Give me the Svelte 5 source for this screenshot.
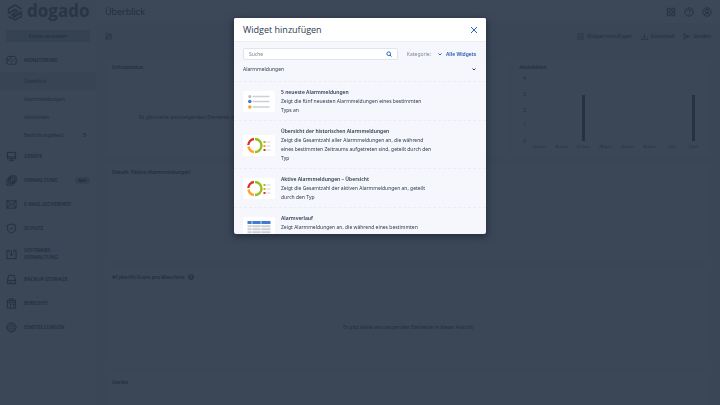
<script>
    let search = $state("");
    let category = $state("Alle Widgets");
    let isOpen = $state(true);
    let groupOpen = $state(true);

    let subItems = [
        { label: "Überblick", active: true },
        { label: "Alarmmeldungen" },
        { label: "Aktivitäten" },
        { label: "Bedrohungsfeed", count: 5 },
    ];
    let menu = [
        { label: "GERÄTE", icon: "screen" },
        { label: "VERWALTUNG", icon: "squares", badge: "NEU" },
        { label: "E-MAIL-SICHERHEIT", icon: "mail" },
        { label: "SCHUTZ", icon: "shield" },
        { label: "SOFTWARE-\nVERWALTUNG", icon: "box" },
        { label: "BACKUP STORAGE", icon: "disk" },
        { label: "BERICHTE", icon: "report" },
        { label: "EINSTELLUNGEN", icon: "gear" },
    ];
    let days = [
        { label: "25 Juni", value: 0 },
        { label: "26 Juni", value: 0 },
        { label: "27 Juni", value: 3 },
        { label: "28 Juni", value: 0 },
        { label: "29 Juni", value: 0 },
        { label: "30 Juni", value: 0 },
        { label: "1 Juli", value: 0 },
        { label: "2 Juli", value: 3 },
    ];
    let widgets = [
        {
            title: "5 neueste Alarmmeldungen",
            text: "Zeigt die fünf neuesten Alarmmeldungen eines bestimmten\nTyps an",
            thumb: "list",
        },
        {
            title: "Übersicht der historischen Alarmmeldungen",
            text: "Zeigt die Gesamtzahl aller Alarmmeldungen an, die während\neines bestimmten Zeitraums aufgetreten sind, geteilt durch den\nTyp",
            thumb: "donut",
        },
        {
            title: "Aktive Alarmmeldungen – Übersicht",
            text: "Zeigt die Gesamtzahl der aktiven Alarmmeldungen an, geteilt\ndurch den Typ",
            thumb: "donut",
        },
        {
            title: "Alarmverlauf",
            text: "Zeigt Alarmmeldungen an, die während eines bestimmten\nZeitraums aufgetreten sind",
            thumb: "table",
        },
    ];
</script>

{#snippet icon(name)}
    <svg class="icon" viewBox="0 0 24 24" aria-hidden="true">
        {#if name === "gauge"}
            <path d="M7 21c-3 0-5-2-5-5V9c0-4 2-6 6-6h8c4 0 6 2 6 6v7c0 3-2 5-5 5" />
            <path d="M11 15l5-6M6 13c0-4 3-6 6-6M8 20h8" />
        {:else if name === "screen"}
            <path d="M3 3h18v14H3zM3 13h18M12 17v4M7 21h10" />
        {:else if name === "squares"}
            <path d="M9 2h13v13H9zM2 9h13v13H2zM6 5h13v13H6z" />
        {:else if name === "mail"}
            <path d="M2 4h20v16H2zM2 4l10 9L22 4M2 20l8-9M22 20l-8-9" />
        {:else if name === "shield"}
            <path d="M12 2l9 3v7c0 5-4 8-9 10-5-2-9-5-9-10V5zM8 11l3 3 5-5" />
        {:else if name === "box"}
            <path d="M2 3v18h20V3M2 3h5v5M22 3h-5v5M12 3v11M8 11l4 4 4-4" />
        {:else if name === "disk"}
            <path d="M6 3h12l3 11v7H3v-7zM3 14h18M7 18h4M16 18h2" />
        {:else if name === "report"}
            <path d="M3 5h18v17H3zM8 5V2h8v3M3 9h18M7 13h4l-2 6M14 13h4l-2 6" />
        {:else if name === "gear"}
            <circle cx="12" cy="12" r="4" />
            <path d="M10 2h4l1 3 3-1 2 2-1 3 3 1v4l-3 1 1 3-2 2-3-1-1 3h-4l-1-3-3 1-2-2 1-3-3-1v-4l3-1-1-3 2-2 3 1z" />
        {:else if name === "grid"}
            <path d="M3 3h7v7H3zM14 3h7v7h-7zM3 14h7v7H3zM14 14h7v7h-7z" />
        {:else if name === "help"}
            <circle cx="12" cy="12" r="10" />
            <path d="M8 10c0-5 8-5 8-1 0 3-4 3-4 5M12 17v2" />
        {:else if name === "user"}
            <circle cx="12" cy="12" r="10" />
            <circle cx="12" cy="10" r="4" />
            <path d="M5 19c2-5 12-5 14 0" />
        {:else if name === "add"}
            <path d="M3 3h18v18H3zM12 8v8M8 12h8" />
        {:else if name === "download"}
            <path d="M12 2v14M7 11l5 5 5-5M2 16v6h20v-6" />
        {:else if name === "send"}
            <path d="M3 3l19 9-19 9 3-9zM6 12h10" />
        {:else if name === "expand"}
            <path d="M3 8V3h11M21 8v13h-5M3 13v8h8v-8zM10 14l9-9M12 4h8v8" />
        {/if}
    </svg>
{/snippet}

{#snippet chevron()}
    <svg class="chevron" viewBox="0 0 8 6" aria-hidden="true"><path d="M1 1l3 3 3-3" /></svg>
{/snippet}

{#snippet thumb(name)}
    <svg class="thumb" viewBox="0 0 31 21" aria-hidden="true">
        {#if name === "list"}
            <circle cx="6.300" cy="5.500" r="1.500" fill="#b4bac4" />
            <circle cx="6.300" cy="10.500" r="1.700" fill="#3d78d2" />
            <circle cx="6.300" cy="16" r="1.700" fill="#fa9f1c" />
            <path d="M9 5.500h17M9 10.500h17M9 16h17" stroke="#ccd0d7" stroke-width="1.600" />
        {:else if name === "donut"}
            <g fill="none" stroke-width="2.400">
                <path d="M11.500 4a6.500 6.500 0 0 1 0 13" stroke="#95c11f" />
                <path d="M10.500 17a6.500 6.500 0 0 1-5.500-5.500" stroke="#ffa22e" />
                <path d="M4.800 10a6.500 6.500 0 0 1 5.700-6" stroke="#d8352a" />
            </g>
            <path d="M20 6h2v2h-2z" fill="#95c11f" />
            <path d="M20 10h2v2h-2z" fill="#fa9f1c" />
            <path d="M20 14h2v2h-2z" fill="#d8352a" />
            <path d="M23 7h4M23 11h4M23 15h4" stroke="#ccd0d7" />
        {:else}
            <path d="M4 4h23v3H4z" fill="#437bd0" />
            <path d="M4 9.300h23M4 12.300h23M4 15.300h23M4 18h23" stroke="#cbd0d8" stroke-width="2" />
            <path d="M8.500 4v15M17.500 4v15" stroke="#fff" stroke-width=".7" />
        {/if}
    </svg>
{/snippet}

<div class="page">
    <aside>
        <a class="logo" href="#home">
            <svg viewBox="0 0 32 34" aria-hidden="true">
                <path d="M3 19V10l13-8 13 8M29 15v10l-13 7-13-7M3 19l13-8 5 3-12 8M29 15l-13 8-5-3M9 22l6 4 14-9" />
            </svg>
            <span>dogado</span>
        </a>
        <button class="account">Konto verwalten</button>
        <nav>
            <a class="item" href="#monitoring">{@render icon("gauge")}<span>MONITORING</span></a>
            {#each subItems as { label, active, count }}
                <a class="sub" class:active href="#{label}">
                    <span>{label}</span>
                    {#if count}<b>{count}</b>{/if}
                </a>
            {/each}
            {#each menu as { label, icon: name, badge }}
                <a class="item" href="#{name}">
                    {@render icon(name)}
                    <span>{label}</span>
                    {#if badge}<b class="badge">{badge}</b>{/if}
                </a>
            {/each}
        </nav>
    </aside>

    <div class="content">
        <header>
            <h1>Überblick</h1>
            <button aria-label="Apps">{@render icon("grid")}</button>
            <button aria-label="Hilfe">{@render icon("help")}</button>
            <button aria-label="Konto">{@render icon("user")}</button>
        </header>
        <div class="toolbar">
            <button class="first" aria-label="Vollbild">{@render icon("expand")}</button>
            <button onclick={() => (isOpen = true)}>{@render icon("add")}Widget hinzufügen</button>
            <button>{@render icon("download")}Download</button>
            <button>{@render icon("send")}Senden</button>
        </div>

        <main>
            <section class="card">
                <h2>Schutzstatus</h2>
                <p class="empty">Es gibt keine anzuzeigenden Elemente in dieser Ansicht</p>
            </section>
            <section class="card"></section>
            <section class="card">
                <h2>Aktivitäten</h2>
                <div class="chart">
                    <div class="axis">
                        {#each [4, 3, 2, 1, 0] as n}<span>{n}</span>{/each}
                    </div>
                    <div class="plot">
                        {#each days as { label, value }}
                            <div class="day">
                                <div class="track"><i style="height:{value * 25}%"></i></div>
                                <span>{label}</span>
                            </div>
                        {/each}
                    </div>
                </div>
            </section>
            <section class="card wide">
                <h2>Details 'Aktive Alarmmeldungen'</h2>
            </section>
            <section class="card wide">
                <h2>#CyberFit-Score pro Maschine <em>?</em></h2>
                <p class="empty">Es gibt keine anzuzeigenden Elemente in dieser Ansicht</p>
            </section>
            <section class="card wide">
                <h2>Geräte</h2>
            </section>
        </main>
    </div>
</div>

{#if isOpen}
    <div class="overlay">
        <div class="modal" role="dialog" aria-labelledby="modal-title">
            <div class="modal-head">
                <h2 id="modal-title">Widget hinzufügen</h2>
                <button aria-label="Schließen" onclick={() => (isOpen = false)}>
                    <svg viewBox="0 0 8 8" aria-hidden="true"><path d="M1 1l6 6M7 1l-6 6" /></svg>
                </button>
            </div>
            <div class="filter">
                <div class="search">
                    <input type="text" aria-label="Suche" placeholder="Suche" bind:value={search} />
                    <svg viewBox="0 0 12 12" aria-hidden="true">
                        <circle cx="5.500" cy="5.500" r="3.700" />
                        <path d="M8 8l3 3" />
                    </svg>
                </div>
                <label for="category">Kategorie:</label>
                {@render chevron()}
                <select id="category" bind:value={category}>
                    <option>Alle Widgets</option>
                </select>
            </div>
            <button class="group" onclick={() => (groupOpen = !groupOpen)}>
                <span>Alarmmeldungen</span>
                {@render chevron()}
            </button>
            {#if groupOpen}
                <ul>
                    {#each widgets as w}
                        <li>
                            {@render thumb(w.thumb)}
                            <div>
                                <h3>{w.title}</h3>
                                <p>{w.text}</p>
                            </div>
                        </li>
                    {/each}
                </ul>
            {/if}
        </div>
    </div>
{/if}

<style>
    :global(body) {
        background: #3a4656;
        font-family: "Noto Sans", "Open Sans", sans-serif;
        font-size: 5px;
        line-height: 9px;
        color: #232e3c;
    }
    h1, h2, h3, p, ul {
        margin: 0;
        padding: 0;
        font-weight: 400;
    }
    a {
        color: inherit;
        text-decoration: none;
    }
    button, input, select {
        font: inherit;
        color: inherit;
        background: none;
        border: 0;
        padding: 0;
        margin: 0;
    }
    svg {
        flex: none;
        display: block;
        fill: none;
        stroke: currentColor;
    }
    .icon {
        width: 11px;
        height: 11px;
        stroke-width: 2;
    }
    .page {
        display: flex;
        height: 100vh;
        overflow: hidden;
    }

    /* sidebar */
    aside {
        width: 96px;
        flex: none;
        background: #3b4757;
    }
    .logo {
        display: flex;
        align-items: center;
        gap: 4px;
        height: 24px;
        padding-left: 7px;
        font-family: "Open Sans", "Noto Sans", sans-serif;
        font-size: 17px;
        line-height: 20px;
        font-weight: 700;
        color: #2a3543;
    }
    .logo svg {
        width: 16px;
        height: 17px;
        stroke-width: 3;
    }
    .logo span {
        margin-bottom: 3px;
    }
    .account {
        display: block;
        width: calc(100% - 12px);
        height: 12px;
        margin: 6px;
        background: #354252;
        border-radius: 1px;
    }
    .item {
        display: flex;
        align-items: center;
        gap: 7px;
        padding: 7px 6px 6px;
        font-weight: 600;
        line-height: 7px;
        white-space: pre;
    }
    .badge {
        margin-left: auto;
        width: 15px;
        border-radius: 4px;
        background: #334050;
        text-align: center;
        font-size: 4px;
    }
    .sub {
        display: flex;
        justify-content: space-between;
        align-items: center;
        height: 18px;
        padding: 0 10px 0 24px;
    }
    .sub.active {
        background: #384454;
    }

    /* content */
    .content {
        flex: 1;
        min-width: 0;
    }
    header {
        display: flex;
        align-items: center;
        gap: 8px;
        height: 23px;
        padding: 0 8px 0 9px;
        background: #3c4858;
    }
    header .icon {
        width: 10px;
        height: 10px;
    }
    h1 {
        margin-right: auto;
        font-family: "Open Sans", "Noto Sans", sans-serif;
        font-size: 9px;
        line-height: 12px;
    }
    .toolbar {
        display: flex;
        align-items: center;
        gap: 9px;
        height: 26px;
        padding: 0 9px;
    }
    .toolbar button {
        display: flex;
        align-items: center;
        gap: 3px;
    }
    .toolbar .first {
        margin-right: auto;
    }
    .toolbar .icon {
        width: 7px;
        height: 7px;
    }
    main {
        display: grid;
        grid-template-columns: repeat(3, 1fr);
        grid-auto-rows: 98px;
        gap: 7px;
        padding: 10px 10px 0;
    }
    .card {
        display: flex;
        flex-direction: column;
        min-width: 0;
        padding: 4px 6px;
        box-sizing: border-box;
        background: #3b4757;
        border-radius: 2px;
    }
    .wide {
        grid-column: 1 / 4;
    }
    .card h2 {
        font-size: 5px;
        font-weight: 600;
    }
    .card em {
        display: inline-block;
        width: 6px;
        height: 6px;
        margin-left: 2px;
        border-radius: 3px;
        background: #2a3645;
        color: #3c4858;
        font-style: normal;
        line-height: 6px;
        text-align: center;
    }
    .empty {
        margin: auto;
        padding-top: 10px;
    }
    .chart {
        flex: 1;
        display: flex;
        gap: 2px;
        padding-left: 4px;
    }
    .axis {
        display: flex;
        flex-direction: column;
        justify-content: space-between;
        height: 72px;
        margin-top: 2px;
    }
    .plot {
        flex: 1;
        display: grid;
        grid-template-columns: repeat(8, 1fr);
        margin-top: 7px;
    }
    .day {
        display: flex;
        flex-direction: column;
        align-items: center;
        gap: 1px;
        font-size: 4px;
        white-space: nowrap;
    }
    .track {
        display: flex;
        align-items: flex-end;
        height: 62px;
    }
    .track i {
        width: 3px;
        background: #263240;
    }

    /* dialog */
    .overlay {
        position: fixed;
        inset: 0;
        display: flex;
        justify-content: center;
        align-items: flex-start;
        padding-top: 18px;
    }
    .modal {
        display: flex;
        flex-direction: column;
        width: 35vw;
        aspect-ratio: 7 / 6;
        overflow: hidden;
        border-radius: 2px;
        background: #f5f7fd;
        color: #2c3a50;
        box-shadow: 0 2px 7px 1px rgba(20, 30, 45, 0.6);
    }
    .modal-head {
        display: flex;
        justify-content: space-between;
        align-items: center;
        flex: none;
        height: 24px;
        padding: 0 8px 0 9px;
        background: #fff;
        border-bottom: 1px solid #ebeef5;
        box-sizing: border-box;
    }
    .modal-head h2 {
        font-family: "Open Sans", "Noto Sans", sans-serif;
        font-size: 9px;
        line-height: 12px;
    }
    .modal-head svg {
        width: 8px;
        height: 8px;
        color: #2563bf;
    }
    .filter {
        display: flex;
        align-items: center;
        flex: none;
        height: 24px;
        padding: 0 9px;
        color: #2563bf;
    }
    .search {
        display: flex;
        align-items: center;
        flex: 1;
        height: 12px;
        margin-right: 9px;
        padding: 0 5px;
        box-sizing: border-box;
        background: #fff;
        border: 1px solid #dfe5f0;
        border-radius: 2px;
    }
    .search input {
        flex: 1;
        min-width: 0;
        color: #2c3a50;
        outline: none;
    }
    .search input::placeholder {
        color: #76808f;
    }
    .search svg {
        width: 6px;
        height: 6px;
        stroke-width: 2;
    }
    .filter label {
        margin-right: 7px;
        color: #7d8796;
    }
    .filter select {
        appearance: none;
        margin-left: 4px;
        font-weight: 600;
        color: #2458ae;
    }
    .chevron {
        width: 4px;
        height: 3px;
        stroke-width: 2;
    }
    .group {
        display: flex;
        justify-content: space-between;
        align-items: flex-start;
        flex: none;
        height: 15px;
        padding: 0 10px 0 9px;
    }
    .group span {
        line-height: 6px;
    }
    .group .chevron {
        margin-top: 2px;
    }
    ul {
        list-style: none;
    }
    li {
        display: flex;
        align-items: center;
        gap: 6px;
        padding: 6px 9px 5px;
        border-top: 1px dashed #e9edf5;
    }
    .thumb {
        width: 32px;
        height: 21px;
        background: #fff;
        border-radius: 2px;
        stroke: none;
    }
    h3 {
        font-size: 5px;
        font-weight: 600;
    }
    li p {
        white-space: pre-line;
    }
</style>
